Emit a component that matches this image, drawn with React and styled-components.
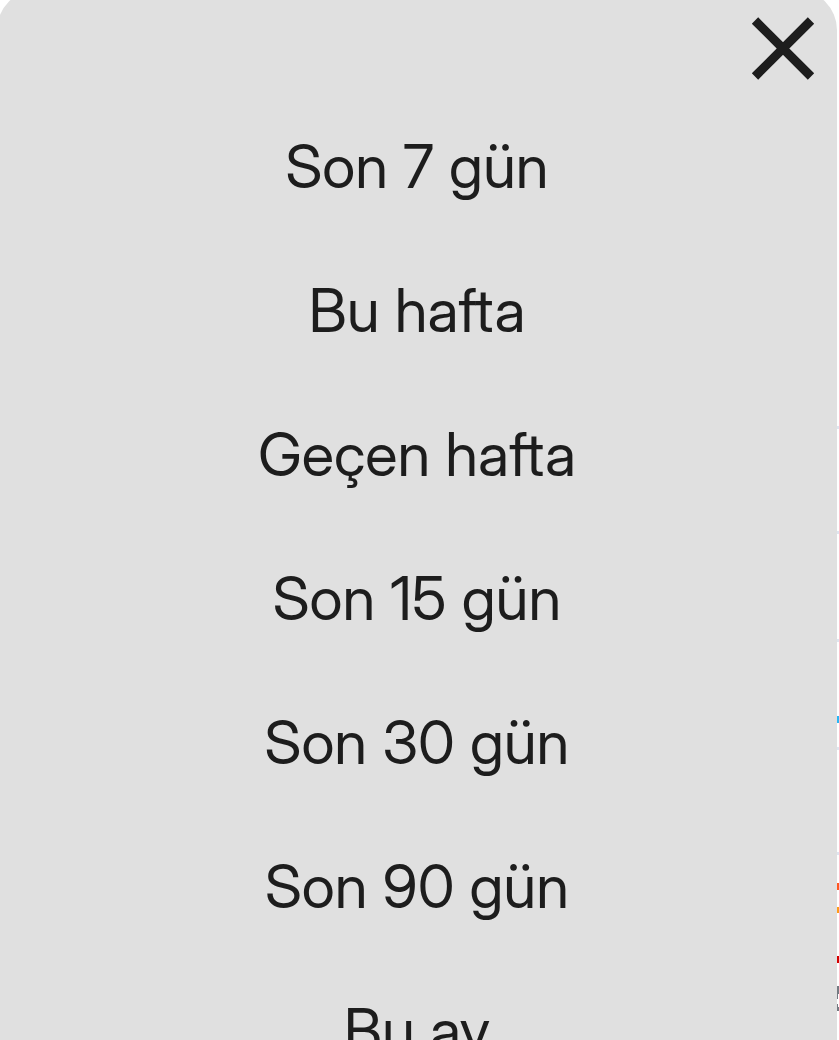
import React from "react";
import styled, { createGlobalStyle } from "styled-components";

const Global = createGlobalStyle`
  * { box-sizing: border-box; }
  body { margin: 0; background: #fff; overflow: hidden; }
`;
const Page = styled.main`
  display: grid;
  grid-template-columns: minmax(0, 1fr) 2px;
  height: 100vh;
  overflow: hidden;
  background: #fff;
`;
const Sheet = styled.section`
  margin: -10px 0 0 -3px;
  padding-top: 10px;
  background: #e0e0e0;
  border-radius: 40px 40px 0 0;
  color: #1d1d1d;
`;
const Header = styled.header`
  display: flex;
  justify-content: flex-end;
  padding: 16px 22px 0 0;
  height: 94px;
`;
const Close = styled.button`
  width: 64px;
  height: 64px;
  padding: 0;
  border: 0;
  background: none;
  color: inherit;
  cursor: pointer;
  svg { display: block; }
`;
const List = styled.ul`
  list-style: none;
  margin: 0;
  padding: 0;
`;
const Option = styled.button`
  display: block;
  width: 100%;
  height: 144px;
  padding: 0;
  border: 0;
  background: none;
  color: inherit;
  font: 400 60px/144px "Inter Display", Inter, "Liberation Sans", sans-serif;
  font-variation-settings: "opsz" 32;
  font-variant-ligatures: none;
  text-align: center;
  cursor: pointer;
`;
const ChartEdge = styled.svg`
  display: block;
  width: 2px;
  height: 1040px;
`;

const options = ["Son 7 gün", "Bu hafta", "Geçen hafta", "Son 15 gün", "Son 30 gün", "Son 90 gün", "Bu ay"];
const gridLines = [426, 531, 639, 747, 852];
const series = [
  { y: 716, h: 7, color: "#29b6f6" },
  { y: 883, h: 7, color: "#ff5722" },
  { y: 907, h: 6, color: "#ff9b1a" },
  { y: 956, h: 7, color: "#d50000" },
];

export default function App() {
  return (
    <Page>
      <Global />
      <Sheet>
        <Header>
          <Close aria-label="Kapat">
            <svg width="64" height="64" viewBox="0 0 64 64" stroke="currentColor" strokeWidth="9">
              <path d="M4 4.500 60 60.500M60 4.500 4 60.500" />
            </svg>
          </Close>
        </Header>
        <List>
          {options.map((o) => <li key={o}><Option>{o}</Option></li>)}
        </List>
      </Sheet>
      <ChartEdge viewBox="0 0 2 1040" aria-hidden="true">
        {gridLines.map((y) => <rect key={y} y={y} width="2" height="3" fill="#dfe5f0" />)}
        {series.map((s) => <rect key={s.y} y={s.y} width="2" height={s.h} fill={s.color} />)}
        <path d="M0 986h2v8H1v5H0zM0 1004h1v3h1v4H0z" fill="#757a82" />
      </ChartEdge>
    </Page>
  );
}
